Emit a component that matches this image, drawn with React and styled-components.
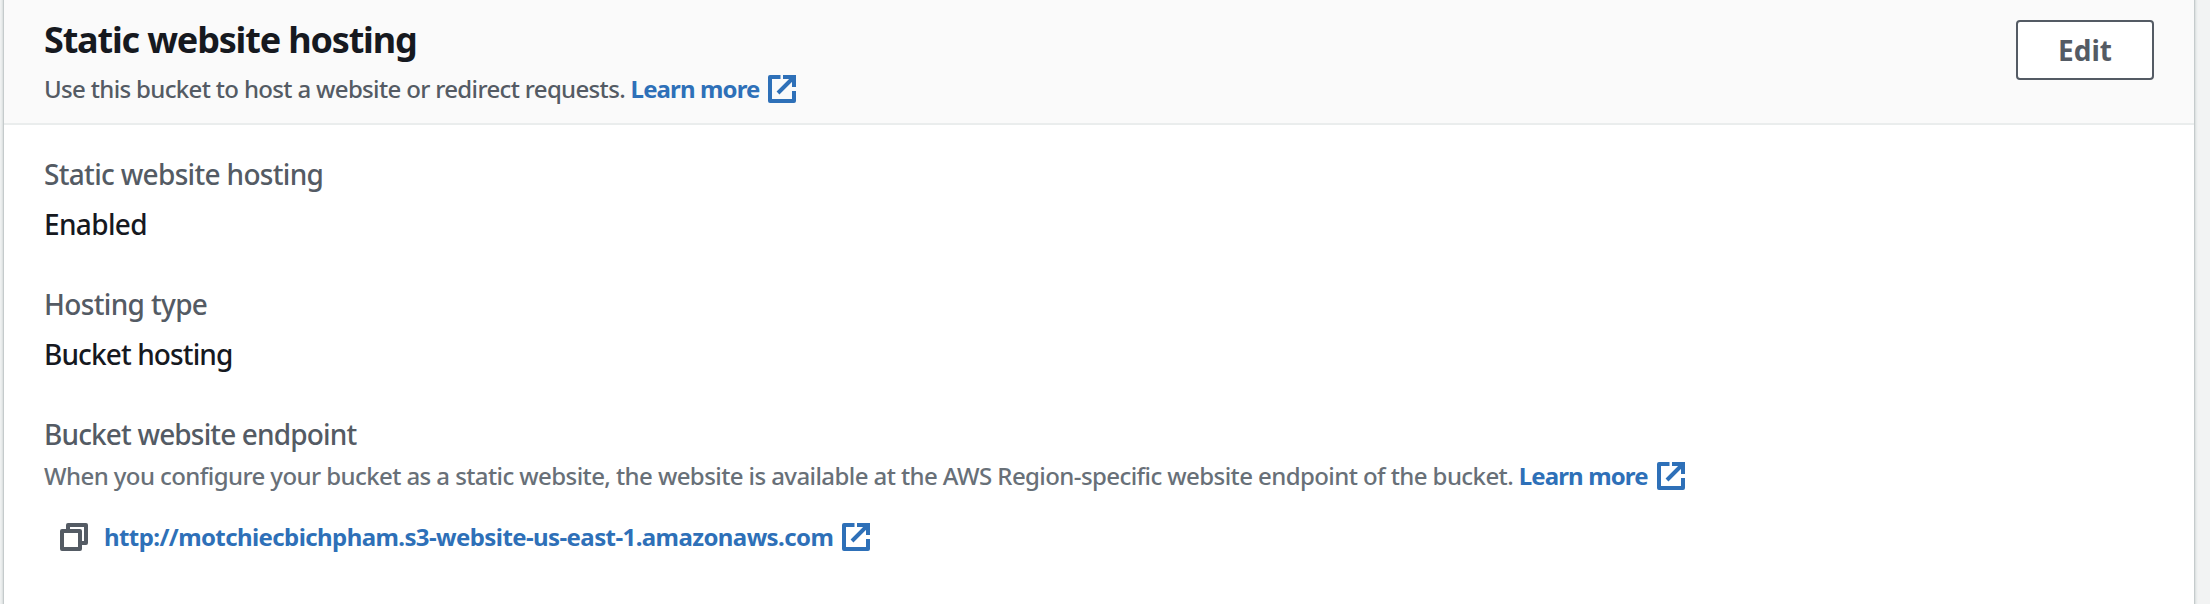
import React from "react";
import styled, { createGlobalStyle } from "styled-components";

const GlobalStyle = createGlobalStyle`
  *, *::before, *::after { box-sizing: border-box; }
  body {
    margin: 0;
    background: #f2f3f3;
    color: #16191f;
    font-family: "Noto Sans", "Open Sans", sans-serif;
    font-weight: 500;
    overflow: hidden;
  }
`;

const Page = styled.main`
  height: 604px;
  padding: 0 16px 0 4px;
  overflow: hidden;
`;

const Panel = styled.section`
  height: 100%;
  background: #fff;
  box-shadow: 0 0 0 1px #c5cbcc, 0 0 2px 2px #d5dbdb;
`;

const PanelHeader = styled.header`
  display: flex;
  justify-content: space-between;
  align-items: flex-start;
  height: 125px;
  padding: 18px 40px 0 40px;
  background: #fafafa;
  border-bottom: 2px solid #eaeded;
`;

const HeaderText = styled.div`
  display: flex;
  flex-direction: column;
  gap: 9px;
`;

const Title = styled.h2`
  margin: 0;
  font-size: 36px;
  line-height: 44px;
  font-weight: 700;
  letter-spacing: -1.17px;
`;

const Description = styled.p`
  display: flex;
  align-items: center;
  margin: 0;
  font-size: 24px;
  line-height: 36px;
  letter-spacing: ${(p) => p.$tracking};
  color: ${(p) => (p.$muted ? "#687078" : "#545b64")};
  white-space: pre;
`;

const Link = styled.a`
  display: inline-flex;
  align-items: center;
  gap: 9px;
  font-size: 24px;
  line-height: 36px;
  font-weight: 700;
  letter-spacing: ${(p) => p.$tracking || "-0.88px"};
  color: #2e70b8;
  text-decoration: none;
`;

const EditButton = styled.button`
  width: 138px;
  height: 60px;
  margin-top: 2px;
  padding: 0 0 1px;
  border: 2px solid #545b64;
  border-radius: 4px;
  background: #fff;
  color: #545b64;
  font: 700 28px/40px "Noto Sans", "Open Sans", sans-serif;
`;

const Fields = styled.dl`
  display: flex;
  flex-direction: column;
  gap: 36px;
  margin: 0;
  padding: 27px 40px 0;
`;

const Field = styled.div`
  display: flex;
  flex-direction: column;
  gap: ${(p) => p.$gap || "6px"};
`;

const Label = styled.dt`
  font-size: 28px;
  line-height: 44px;
  letter-spacing: ${(p) => p.$tracking};
  color: #545b64;
`;

const Value = styled.dd`
  margin: 0;
  font-size: 28px;
  line-height: 44px;
  letter-spacing: ${(p) => p.$tracking};
`;

const Endpoint = styled.dd`
  display: flex;
  align-items: center;
  gap: 16px;
  margin: 23px 0 0;
  padding-left: 16px;
`;

const Icon = styled.svg`
  flex: none;
  width: 28px;
  height: 28px;
  fill: none;
  stroke: currentColor;
  stroke-width: 4;
`;

const CopyIcon = styled(Icon)`
  color: #545b64;
`;

function ExternalIcon() {
  return (
    <Icon viewBox="0 0 28 28" aria-hidden="true">
      <path d="M12.5 2H2v24h24V16" strokeLinejoin="round" />
      <path d="M15 2h11v10M10 18 25 3" />
    </Icon>
  );
}

function ExternalLink({ children, tracking }) {
  return (
    <Link href="#" $tracking={tracking}>
      {children}
      <ExternalIcon />
    </Link>
  );
}

export default function App() {
  return (
    <>
      <GlobalStyle />
      <Page>
        <Panel>
          <PanelHeader>
            <HeaderText>
              <Title>Static website hosting</Title>
              <Description $tracking="-0.66px">
                {"Use this bucket to host a website or redirect requests. "}
                <ExternalLink>Learn more</ExternalLink>
              </Description>
            </HeaderText>
            <EditButton>Edit</EditButton>
          </PanelHeader>
          <Fields>
            <Field>
              <Label $tracking="-0.68px">Static website hosting</Label>
              <Value $tracking="-0.65px">Enabled</Value>
            </Field>
            <Field>
              <Label $tracking="-0.65px">Hosting type</Label>
              <Value $tracking="-0.88px">Bucket hosting</Value>
            </Field>
            <Field $gap="2px">
              <Label $tracking="-0.85px">Bucket website endpoint</Label>
              <Description $muted $tracking="-0.585px">
                {"When you configure your bucket as a static website, the website is available at the AWS Region-specific website endpoint of the bucket. "}
                <ExternalLink>Learn more</ExternalLink>
              </Description>
              <Endpoint>
                <CopyIcon viewBox="0 0 28 28" aria-hidden="true">
                  <path d="M2 8h18v18H2zM8 8V2h18v18h-6" strokeLinejoin="round" />
                </CopyIcon>
                <ExternalLink tracking="-0.59px">
                  http://motchiecbichpham.s3-website-us-east-1.amazonaws.com
                </ExternalLink>
              </Endpoint>
            </Field>
          </Fields>
        </Panel>
      </Page>
    </>
  );
}
